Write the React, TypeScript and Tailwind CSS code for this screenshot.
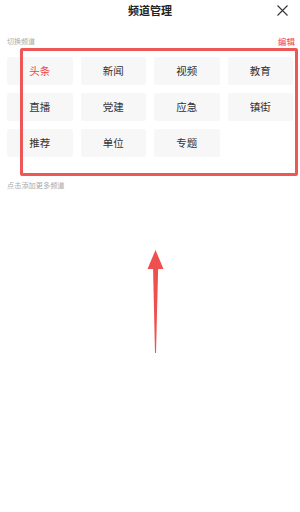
import React from "react";

const tiles = ["头条", "新闻", "视频", "教育", "直播", "党建", "应急", "镇街", "推荐", "单位", "专题"];

export default function App() {
  return (
    <div
      className="relative w-[300px] h-[512px] bg-white overflow-hidden"
      style={{ fontFamily: '"Noto Sans CJK SC", "Noto Sans", sans-serif' }}
    >
      <div className="relative h-[21px] flex items-center justify-center">
        <span className="text-[11px] font-bold text-[#222] leading-none">频道管理</span>
        <svg
          className="absolute right-[12px] top-[5px]"
          width="11"
          height="11"
          viewBox="0 0 11 11"
          fill="none"
          stroke="#333"
          strokeWidth="1.1"
        >
          <path d="M0.5 0.5 L10.5 10.5 M10.5 0.5 L0.5 10.5" />
        </svg>
      </div>
      <div className="mt-[14px] px-[7px] flex items-center justify-between h-[12px]">
        <span className="text-[7px] text-[#aaa] leading-none">切换频道</span>
        <span className="text-[8.5px] text-[#ee4444] leading-none mr-[-2px]">编辑</span>
      </div>
      <div className="mt-[10px] px-[7px] grid grid-cols-4 gap-x-[8px] gap-y-[8px]">
        {tiles.map((t, i) => (
          <div
            key={t}
            className={
              "h-[28px] bg-[#f7f7f7] rounded-[2px] flex items-center justify-center text-[10.5px] leading-none " +
              (i === 0 ? "text-[#ee4444]" : "text-[#333]")
            }
          >
            {t}
          </div>
        ))}
      </div>
      <div className="mt-[25px] px-[7px] text-[7.2px] text-[#aaa] leading-none">点击添加更多频道</div>

      <div className="absolute left-[20px] top-[48px] w-[278px] h-[128px] border-[3px] border-[#ec5858] rounded-[2px]" />

      <svg className="absolute left-[140px] top-[245px]" width="30" height="115" viewBox="140 245 30 115">
        <polygon points="155.5,250 147.5,269 163.5,269" fill="#f04f4f" />
        <polygon points="153,266 158.2,266 156,353 155,353" fill="#f04f4f" />
      </svg>
    </div>
  );
}
